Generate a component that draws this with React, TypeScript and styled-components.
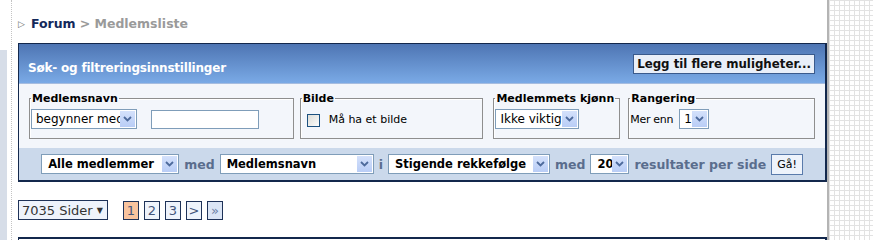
import React from "react";
import styled, { createGlobalStyle } from "styled-components";

const Global = createGlobalStyle`
  html, body { margin: 0; padding: 0; background: #fff; }
  body { font-family: "DejaVu Sans", Verdana, sans-serif; font-size: 11px; color: #000; }
`;

const Page = styled.div`
  display: flex;
  width: 873px;
  height: 240px;
  overflow: hidden;
`;

const LeftCol = styled.div`
  width: 11px;
  border-right: 1px dotted #c4c4c4;
  display: flex;
  flex-direction: column;
`;

const LeftStrip = styled.div`
  margin-top: 50px;
  width: 7px;
  flex: 1;
  background: #d6dde8;
`;

const Main = styled.div`
  width: 809px;
  padding: 16px 0 0 6px;
  display: flex;
  flex-direction: column;
`;

const RightCol = styled.div`
  flex: 1;
  border-left: 2px solid #b4b4b4;
  background-color: #fff;
  background-image:
    linear-gradient(to right, #e2e2e2 1px, transparent 1px),
    linear-gradient(to bottom, #e2e2e2 1px, transparent 1px);
  background-size: 5px 5px;
`;

const Crumbs = styled.div`
  display: flex;
  align-items: center;
  height: 16px;
  font-weight: bold;
  font-size: 12.5px;
  gap: 4px;
  margin-bottom: 12px;
`;

const CrumbArrow = styled.span`
  color: #6b6b6b;
  font-size: 9px;
  font-weight: normal;
  margin-right: 2px;
`;

const CrumbLink = styled.span`
  color: #13285a;
`;

const CrumbCurrent = styled.span`
  color: #9a9a9a;
`;

const Panel = styled.div`
  border: 1px solid #13284c;
  border-right-width: 2px;
  border-bottom-width: 2px;
  display: flex;
  flex-direction: column;
`;

const Header = styled.div`
  height: 40px;
  background: linear-gradient(to bottom, #4e75b3, #7aaae6);
  border-bottom: 1px solid #a6bde0;
  display: flex;
  align-items: flex-start;
  justify-content: space-between;
  padding: 10px 10px 0 9px;
  box-sizing: border-box;
`;

const Title = styled.div`
  color: #fff;
  font-weight: bold;
  font-size: 12px;
  letter-spacing: -0.2px;
  margin-top: 7px;
`;

const HeadButton = styled.div`
  height: 18px;
  padding: 0 3px;
  background: #e9eff9;
  border: 1px solid #3a5a8c;
  color: #111;
  font-weight: bold;
  font-size: 11.8px;
  display: flex;
  align-items: center;
`;

const Body = styled.div`
  background: #f3f6fb;
  display: flex;
  align-items: flex-start;
  padding: 8px 10px 8px 10px;
  height: 64px;
  box-sizing: border-box;
`;

const Field = styled.fieldset<{ $w: number; $ml: number; $gap?: number }>`
  margin: 0 0 0 ${(p) => p.$ml}px;
  width: ${(p) => p.$w}px;
  box-sizing: border-box;
  border: 1px solid #8e8e8e;
  box-shadow: inset 1px 1px 0 #fff;
  padding: 2px 1px 7px 1px;
  height: 47px;
  display: flex;
  align-items: center;
  gap: ${(p) => p.$gap ?? 14}px;
`;

const Legend = styled.legend`
  font-weight: bold;
  font-size: 11px;
  padding: 0 1px;
  margin-left: 0;
  line-height: 13px;
`;

const SelectBox = styled.div<{ $w: number }>`
  display: inline-flex;
  align-items: center;
  width: ${(p) => p.$w}px;
  height: 20px;
  box-sizing: border-box;
  border: 1px solid #7f9db9;
  background: #fff;
  flex-shrink: 0;
`;

const SelectText = styled.div<{ $bold?: boolean }>`
  flex: 1;
  overflow: hidden;
  white-space: nowrap;
  padding-left: ${(p) => (p.$bold ? 6 : 4)}px;
  font-size: ${(p) => (p.$bold ? 11.5 : 12)}px;
  font-weight: ${(p) => (p.$bold ? "bold" : "normal")};
  color: #000;
`;

const ArrowBtn = styled.div`
  width: 15px;
  height: 16px;
  margin-right: 1px;
  background: linear-gradient(to bottom, #d4e1fb, #b9cdf6);
  display: flex;
  align-items: center;
  justify-content: center;
  flex-shrink: 0;
`;

const Chevron = () => (
  <svg width="9" height="6" viewBox="0 0 9 6">
    <path d="M1 1 L4.5 4.5 L8 1" fill="none" stroke="#4d6a9c" strokeWidth="1.8" />
  </svg>
);

const Select: React.FC<{ w: number; text: string; bold?: boolean }> = ({ w, text, bold }) => (
  <SelectBox $w={w}>
    <SelectText $bold={bold}>{text}</SelectText>
    <ArrowBtn>
      <Chevron />
    </ArrowBtn>
  </SelectBox>
);

const TextInput = styled.div`
  width: 108px;
  height: 19px;
  box-sizing: border-box;
  border: 1px solid #7f9db9;
  background: #fff;
`;

const CheckRow = styled.label`
  display: flex;
  align-items: center;
  gap: 9px;
  padding-left: 5px;
  font-size: 11px;
`;

const CheckBox = styled.span`
  width: 13px;
  height: 13px;
  box-sizing: border-box;
  border: 1px solid #1c5180;
  background: linear-gradient(135deg, #dcdcd7, #fdfdfd);
  margin-top: 3px;
`;

const SmallText = styled.span`
  font-size: 11px;
  white-space: nowrap;
  letter-spacing: -0.3px;
`;

const Bar = styled.div`
  height: 32px;
  background: #cbd9eb;
  display: flex;
  align-items: center;
  justify-content: center;
  gap: 5px;
`;

const BarText = styled.span`
  font-weight: bold;
  font-size: 12.5px;
  color: #5a6d8d;
  white-space: nowrap;
`;

const GoButton = styled.div`
  height: 21px;
  box-sizing: border-box;
  padding: 0 5px;
  border: 1px solid #5a7bab;
  background: #eef3fb;
  font-size: 11px;
  display: flex;
  align-items: center;
`;

const Pager = styled.div`
  display: flex;
  align-items: center;
  margin-top: 18px;
  gap: 5px;
`;

const PagesBox = styled.div`
  width: 90px;
  height: 20px;
  box-sizing: border-box;
  border: 1px solid #1e3258;
  background: #eef3fb;
  font-size: 13px;
  color: #333;
  display: flex;
  align-items: center;
  padding-left: 3px;
  margin-right: 10px;
  white-space: nowrap;
`;

const Caret = styled.span`
  font-size: 8px;
  margin-left: 4px;
  color: #333;
`;

const PageBtn = styled.div<{ $kind?: "active" | "last" }>`
  min-width: 16px;
  height: 19px;
  padding: 0 1px;
  box-sizing: border-box;
  border: 1px solid #1e3258;
  background: ${(p) => (p.$kind === "active" ? "#f8c39e" : p.$kind === "last" ? "#dbe5f5" : "#eef3fb")};
  color: ${(p) => (p.$kind === "last" ? "#6b7fa6" : "#44557a")};
  font-size: 13px;
  display: flex;
  align-items: center;
  justify-content: center;
`;

const NextPanel = styled.div`
  margin-top: 17px;
  border-top: 2px solid #13284c;
  border-left: 1px solid #13284c;
  border-right: 2px solid #13284c;
  height: 10px;
  background: #fff;
`;

export default function App() {
  return (
    <Page>
      <Global />
      <LeftCol>
        <LeftStrip />
      </LeftCol>
      <Main>
        <Crumbs>
          <CrumbArrow>▷</CrumbArrow>
          <CrumbLink>Forum</CrumbLink>
          <CrumbCurrent>&gt; Medlemsliste</CrumbCurrent>
        </Crumbs>
        <Panel>
          <Header>
            <Title>Søk- og filtreringsinnstillinger</Title>
            <HeadButton>Legg til flere muligheter...</HeadButton>
          </Header>
          <Body>
            <Field $w={265} $ml={0}>
              <Legend>Medlemsnavn</Legend>
              <Select w={106} text="begynner med" />
              <TextInput />
            </Field>
            <Field $w={184} $ml={6}>
              <Legend>Bilde</Legend>
              <CheckRow>
                <CheckBox />
                <span>Må ha et bilde</span>
              </CheckRow>
            </Field>
            <Field $w={127} $ml={10}>
              <Legend>Medlemmets kjønn</Legend>
              <Select w={84} text="Ikke viktig" />
            </Field>
            <Field $w={187} $ml={8} $gap={6}>
              <Legend>Rangering</Legend>
              <SmallText>Mer enn</SmallText>
              <Select w={30} text="1" />
            </Field>
          </Body>
          <Bar>
            <Select w={138} text="Alle medlemmer" bold />
            <BarText>med</BarText>
            <Select w={154} text="Medlemsnavn" bold />
            <BarText>i</BarText>
            <Select w={162} text="Stigende rekkefølge" bold />
            <BarText>med</BarText>
            <Select w={39} text="20" bold />
            <BarText>resultater per side</BarText>
            <GoButton>Gå!</GoButton>
          </Bar>
        </Panel>
        <Pager>
          <PagesBox>
            7035 Sider<Caret>▼</Caret>
          </PagesBox>
          <PageBtn $kind="active">1</PageBtn>
          <PageBtn>2</PageBtn>
          <PageBtn>3</PageBtn>
          <PageBtn>&gt;</PageBtn>
          <PageBtn $kind="last">»</PageBtn>
        </Pager>
        <NextPanel />
      </Main>
      <RightCol />
    </Page>
  );
}
